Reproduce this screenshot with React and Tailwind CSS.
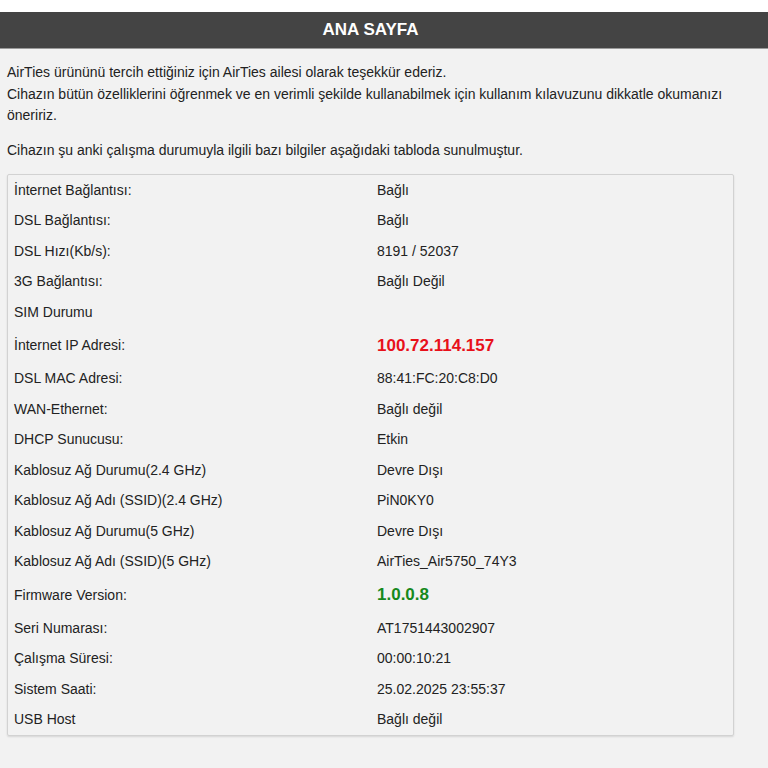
import React from 'react';

const rows = [
  { label: 'İnternet Bağlantısı:', value: 'Bağlı' },
  { label: 'DSL Bağlantısı:', value: 'Bağlı' },
  { label: 'DSL Hızı(Kb/s):', value: '8191 / 52037' },
  { label: '3G Bağlantısı:', value: 'Bağlı Değil' },
  { label: 'SIM Durumu', value: '' },
  { label: 'İnternet IP Adresi:', value: '100.72.114.157', tone: 'red' },
  { label: 'DSL MAC Adresi:', value: '88:41:FC:20:C8:D0' },
  { label: 'WAN-Ethernet:', value: 'Bağlı değil' },
  { label: 'DHCP Sunucusu:', value: 'Etkin' },
  { label: 'Kablosuz Ağ Durumu(2.4 GHz)', value: 'Devre Dışı' },
  { label: 'Kablosuz Ağ Adı (SSID)(2.4 GHz)', value: 'PiN0KY0' },
  { label: 'Kablosuz Ağ Durumu(5 GHz)', value: 'Devre Dışı' },
  { label: 'Kablosuz Ağ Adı (SSID)(5 GHz)', value: 'AirTies_Air5750_74Y3' },
  { label: 'Firmware Version:', value: '1.0.0.8', tone: 'green' },
  { label: 'Seri Numarası:', value: 'AT1751443002907' },
  { label: 'Çalışma Süresi:', value: '00:00:10:21' },
  { label: 'Sistem Saati:', value: '25.02.2025 23:55:37' },
  { label: 'USB Host', value: 'Bağlı değil' },
];

export default function App() {
  return (
    <div className="min-h-[768px] bg-[#f2f2f2] font-['Liberation_Sans',Arial,sans-serif] text-[14px] text-[#222]">
      <div className="h-3 bg-white" />
      <div className="flex h-[37px] items-center justify-center border-b border-[#9a9a9a] bg-[#444444] pr-[27px]">
        <h1 className="text-[17px] font-bold text-white">ANA SAYFA</h1>
      </div>

      <div className="px-[7px] pt-[13px]">
        <p className="leading-[21.5px]">
          AirTies ürününü tercih ettiğiniz için AirTies ailesi olarak teşekkür ederiz.
          <br />
          Cihazın bütün özelliklerini öğrenmek ve en verimli şekilde kullanabilmek için kullanım kılavuzunu dikkatle okumanızı öneririz.
        </p>
        <p className="mt-[13px] leading-[21.5px]">
          Cihazın şu anki çalışma durumuyla ilgili bazı bilgiler aşağıdaki tabloda sunulmuştur.
        </p>

        <div className="mt-[13px] w-[727px] rounded-[2px] border border-[#d2d2d2] shadow-[0_1px_2px_rgba(0,0,0,0.12)]">
          {rows.map((row) => {
            const big = row.tone === 'red' || row.tone === 'green';
            return (
              <div key={row.label} className={`flex items-center ${big ? 'h-[36px]' : 'h-[30.5px]'}`}>
                <div className="w-[369px] pl-[6px]">{row.label}</div>
                <div
                  className={
                    row.tone === 'red'
                      ? 'text-[17px] font-bold text-[#e8101a]'
                      : row.tone === 'green'
                        ? 'text-[17px] font-bold text-[#16891c]'
                        : ''
                  }
                >
                  {row.value}
                </div>
              </div>
            );
          })}
        </div>
      </div>
    </div>
  );
}
